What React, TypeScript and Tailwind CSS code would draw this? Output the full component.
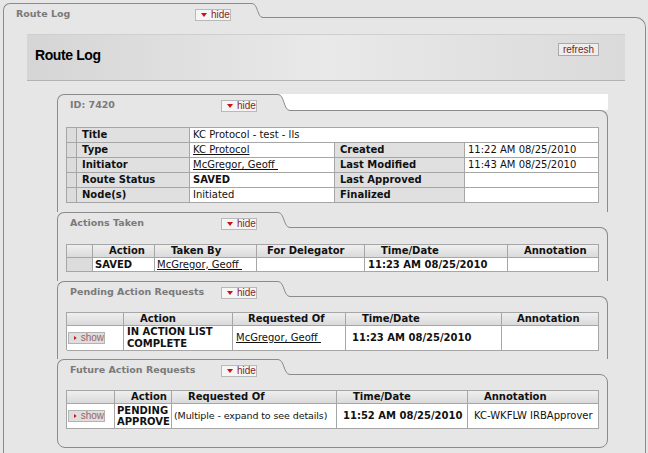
import clsx from 'clsx';
import type { ReactNode } from 'react';

function HideButton() {
  return (
    <span className="mt-[5px] flex h-[12px] w-[36px] shrink-0 items-center gap-[4px] border border-[#b9b9b9] bg-[#f5f5f5] pl-[5px] font-['Liberation_Sans',Arial,sans-serif] text-[10px] leading-none font-normal text-[#8a1c1c]">
      <svg width="6" height="4" viewBox="0 0 6 4">
        <path d="M0 0h6L3 4z" fill="#cc1212" />
      </svg>
      hide
    </span>
  );
}

function ShowButton() {
  return (
    <span className="flex h-[12px] w-[37px] items-center gap-[4px] border border-[#b3b3b3] bg-[#dedede] pl-[5px] font-['Liberation_Sans',Arial,sans-serif] text-[10px] leading-none text-[#9a6363]">
      <svg width="4" height="6" viewBox="0 0 4 6">
        <path d="M0 0v6l4-3z" fill="#cc1212" />
      </svg>
      show
    </span>
  );
}

// s-shaped edge on the right of a tab
function Curve({ w, h, white }: { w: number; h: number; white?: boolean }) {
  const d = `M0 0.5 C${w * 0.55} 0.5 ${w * 0.45} ${h - 0.5} ${w} ${h - 0.5}`;
  return (
    <svg width={w} height={h} viewBox={`0 0 ${w} ${h}`} className="relative z-10 -mb-px block shrink-0">
      {white && <rect x="0" y="0" width={w} height={h - 1} fill="#ffffff" />}
      <path d={`${d} V${h} H0 Z`} fill="#e6e6e6" />
      <path d={d} fill="none" stroke="#8b8b8b" strokeWidth="1" />
    </svg>
  );
}

function TabRow({ title, outer, white }: { title: string; outer?: boolean; white?: boolean }) {
  return (
    <div className={clsx('flex items-end', outer ? 'h-[14px]' : white ? 'h-[16px]' : 'h-[15px]')}>
      <div
        className={clsx(
          'relative z-10 -mb-px flex shrink-0 items-start rounded-tl-[7px] border-t border-l border-[#8b8b8b] bg-[#e6e6e6] pl-[12px]',
          outer ? 'h-[15px] w-[249px]' : white ? 'h-[17px] w-[221px]' : 'h-[16px] w-[221px]'
        )}
      >
        <span className={clsx('pt-[4px] text-[9.5px] leading-[12px] font-bold whitespace-nowrap text-[#7a7a7a]', outer ? 'w-[179px]' : 'w-[151px]')}>
          {title}
        </span>
        <HideButton />
      </div>
      <Curve w={outer ? 11 : 12} h={outer ? 15 : white ? 17 : 16} white={white} />
      <div className={clsx('h-full flex-1', white && 'bg-white')} />
    </div>
  );
}

function Box({ title, white, last, className, children }: { title: string; white?: boolean; last?: boolean; className: string; children: ReactNode }) {
  return (
    <div>
      <TabRow title={title} white={white} />
      <div
        className={clsx(
          'rounded-tr-[8px] border-t border-r border-l border-[#8b8b8b] bg-[#e6e6e6] pl-[8px]',
          last && 'rounded-b-[8px] border-b',
          className
        )}
      >
        {children}
      </div>
    </div>
  );
}

function Gut({ white }: { white?: boolean }) {
  return <div className={clsx('border-r border-b border-[#a6a6a6]', white ? 'bg-white' : 'bg-[#dcdcdc]')} />;
}

function Lbl({ children }: { children: ReactNode }) {
  return <div className="flex items-center border-r border-b border-[#a6a6a6] bg-[#e0e0e0] pl-[5px] font-bold whitespace-nowrap">{children}</div>;
}

function Val({ children, className }: { children?: ReactNode; className?: string }) {
  return <div className={clsx('flex items-center border-r border-b border-[#a6a6a6] bg-white whitespace-nowrap', className ?? 'pl-[3px]')}>{children}</div>;
}

function Th({ children, className }: { children?: ReactNode; className?: string }) {
  return (
    <div className={clsx('flex items-center border-r border-b border-[#a6a6a6] bg-linear-to-b from-[#efefef] to-[#dadada] font-bold whitespace-nowrap', className ?? 'pl-[16px]')}>
      {children}
    </div>
  );
}

function Person() {
  return <span className="underline underline-offset-1">McGregor, Geoff&nbsp;</span>;
}

function DocTable() {
  const cols = 'grid grid-cols-[10px_113px_145px_130px_134px] h-[15px]';
  return (
    <div className="w-[533px] border-t border-l border-[#a6a6a6]">
      <div className={cols}>
        <Gut />
        <Lbl>Title</Lbl>
        <Val className="col-span-3 pl-[3px]">KC Protocol - test - lls</Val>
      </div>
      <div className={cols}>
        <Gut />
        <Lbl>Type</Lbl>
        <Val>
          <span className="underline underline-offset-1">KC Protocol</span>
        </Val>
        <Lbl>Created</Lbl>
        <Val>11:22 AM 08/25/2010</Val>
      </div>
      <div className={cols}>
        <Gut />
        <Lbl>Initiator</Lbl>
        <Val>
          <Person />
        </Val>
        <Lbl>Last Modified</Lbl>
        <Val>11:43 AM 08/25/2010</Val>
      </div>
      <div className={cols}>
        <Gut />
        <Lbl>Route Status</Lbl>
        <Val className="pl-[3px] font-bold">SAVED</Val>
        <Lbl>Last Approved</Lbl>
        <Val />
      </div>
      <div className={cols}>
        <Gut />
        <Lbl>Node(s)</Lbl>
        <Val>Initiated</Val>
        <Lbl>Finalized</Lbl>
        <Val />
      </div>
    </div>
  );
}

function ActionsTable() {
  const cols = 'grid grid-cols-[26px_62px_102px_108px_143px_91px]';
  return (
    <div className="w-[533px] border-t border-l border-[#a6a6a6]">
      <div className={clsx(cols, 'h-[13px]')}>
        <Th />
        <Th>Action</Th>
        <Th>Taken By</Th>
        <Th className="pl-[10px]">For Delegator</Th>
        <Th>Time/Date</Th>
        <Th>Annotation</Th>
      </div>
      <div className={clsx(cols, 'h-[14px]')}>
        <Gut />
        <Val className="pl-[2px] font-bold">SAVED</Val>
        <Val className="pl-[2px]">
          <Person />
        </Val>
        <Val />
        <Val className="pl-[3px] font-bold">11:23 AM 08/25/2010</Val>
        <Val />
      </div>
    </div>
  );
}

function PendingTable() {
  const cols = 'grid grid-cols-[57px_109px_113px_156px_97px]';
  return (
    <div className="w-[533px] border-t border-l border-[#a6a6a6]">
      <div className={clsx(cols, 'h-[13px]')}>
        <Th />
        <Th>Action</Th>
        <Th className="pl-[15px]">Requested Of</Th>
        <Th>Time/Date</Th>
        <Th className="pl-[15px]">Annotation</Th>
      </div>
      <div className={clsx(cols, 'h-[24px]')}>
        <Val className="pl-[1px]">
          <ShowButton />
        </Val>
        <Val className="pl-[3px] leading-[12px] font-bold">
          IN ACTION LIST
          <br />
          COMPLETE
        </Val>
        <Val className="pl-[3px]">
          <Person />
        </Val>
        <Val className="pl-[6px] font-bold">11:23 AM 08/25/2010</Val>
        <Val />
      </div>
    </div>
  );
}

function FutureTable() {
  const cols = 'grid grid-cols-[48px_57px_165px_131px_131px]';
  return (
    <div className="w-[533px] border-t border-l border-[#a6a6a6]">
      <div className={clsx(cols, 'h-[13px]')}>
        <Th />
        <Th>Action</Th>
        <Th>Requested Of</Th>
        <Th>Time/Date</Th>
        <Th>Annotation</Th>
      </div>
      <div className={clsx(cols, 'h-[25px]')}>
        <Val className="pl-[1px]">
          <ShowButton />
        </Val>
        <Val className="pl-[2px] leading-[11px] font-bold">
          PENDING
          <br />
          APPROVE
        </Val>
        <Val className="pl-[2px] text-[9.5px] tracking-[-0.1px]">(Multiple - expand to see details)</Val>
        <Val className="pl-[6px] font-bold">11:52 AM 08/25/2010</Val>
        <Val className="pl-[6px]">KC-WKFLW IRBApprover</Val>
      </div>
    </div>
  );
}

export default function App() {
  return (
    <div className="h-[453px] overflow-hidden bg-[#e6e6e6] pt-[3px] font-['DejaVu_Sans',Verdana,sans-serif] text-[10px] leading-[12px] text-[#111]">
      <div className="ml-[3px] w-[643px]">
        <TabRow title="Route Log" outer />
        <div className="rounded-tr-[10px] border-t border-r border-l border-[#8b8b8b] pt-[16px] pr-[20px] pb-[20px] pl-[23px]">
          <div className="flex h-[47px] justify-between border-t border-b border-t-[#cfcfcf] border-b-[#b3b3b3] bg-linear-to-r from-[#d5d5d5] via-[#e9e9e9] to-[#dadada] pr-[26px] pl-[8px]">
            <div className="mt-[12px] font-['Liberation_Sans',Arial,sans-serif] text-[14px] leading-[16px] font-bold tracking-[-0.4px] text-black">
              Route Log
            </div>
            <span className="mt-[8px] flex h-[13px] w-[41px] items-center justify-center border border-[#a9a9a9] bg-[#eeeeee] font-['Liberation_Sans',Arial,sans-serif] text-[10px] leading-none text-[#7a1f1f]">
              refresh
            </span>
          </div>
          <div className="mt-[13px] pr-[17px] pl-[30px]">
            <Box title="ID: 7420" white className="pt-[16px] pb-[9px]">
              <DocTable />
            </Box>
            <Box title="Actions Taken" className="pt-[16px] pb-[9px]">
              <ActionsTable />
            </Box>
            <Box title="Pending Action Requests" className="pt-[15px] pb-[9px]">
              <PendingTable />
            </Box>
            <Box title="Future Action Requests" last className="pt-[15px] pb-[18px]">
              <FutureTable />
            </Box>
          </div>
        </div>
      </div>
    </div>
  );
}
